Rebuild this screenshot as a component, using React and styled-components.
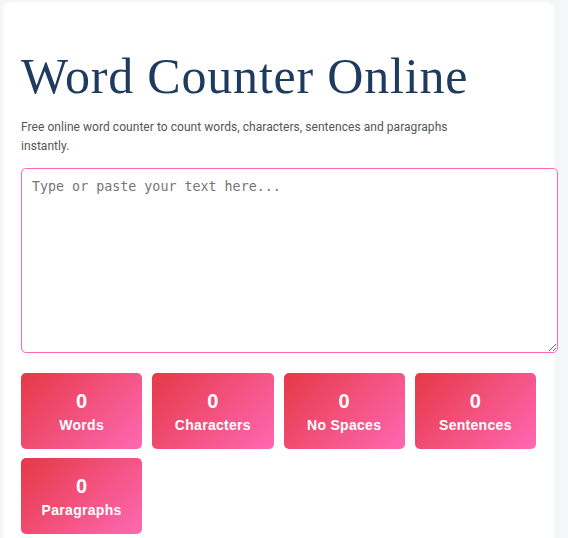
import React from "react";
import styled, { createGlobalStyle } from "styled-components";

const Global = createGlobalStyle`
  html, body { margin: 0; padding: 0; background: #f5f6f8; }
  * { box-sizing: border-box; }
`;

const Page = styled.div`
  padding: 2px 14px 0 3px;
`;

const Card = styled.main`
  background: #ffffff;
  border-radius: 8px;
  padding: 18px 18px 20px;
  min-height: 560px;
`;

const Title = styled.h1`
  margin: 26px 0 0;
  font-family: "Liberation Serif", "Times New Roman", serif;
  font-weight: 400;
  font-size: 50px;
  letter-spacing: 0.8px;
  line-height: 60px;
  color: #1e3a5f;
`;

const Subtitle = styled.p`
  margin: 12px 0 0;
  max-width: 470px;
  font-family: Roboto, "Liberation Sans", sans-serif;
  font-size: 12px;
  letter-spacing: 0.05px;
  line-height: 19px;
  color: #555555;
`;

const TextArea = styled.textarea`
  display: block;
  box-sizing: content-box;
  width: 100%;
  height: 163px;
  margin: 12px 0 0;
  padding: 10px;
  border: 1px solid #ff69b4;
  border-radius: 5px;
  font-family: "DejaVu Sans Mono", monospace;
  font-size: 13.333px;
  color: #333;
  background: #fff;
  outline: none;
  &::placeholder { color: #757575; }
`;

const Stats = styled.div`
  display: grid;
  grid-template-columns: repeat(auto-fill, minmax(120px, 1fr));
  gap: 9px 10px;
  margin-top: 20px;
`;

const StatBox = styled.div`
  height: 76px;
  border-radius: 5px;
  background: linear-gradient(135deg, #e63946 0%, #ff69b4 100%);
  color: #ffffff;
  display: flex;
  flex-direction: column;
  align-items: center;
  justify-content: center;
  font-family: "Liberation Sans", Arial, sans-serif;
  font-weight: 700;
`;

const StatValue = styled.div`
  font-size: 20px;
  line-height: 24px;
`;

const StatLabel = styled.div`
  margin-top: 4px;
  font-size: 14px;
  letter-spacing: 0.3px;
  line-height: 17px;
`;

const stats = ["Words", "Characters", "No Spaces", "Sentences", "Paragraphs"];

export default function App() {
  return (
    <Page>
      <Global />
      <Card>
        <Title>Word Counter Online</Title>
        <Subtitle>
          Free online word counter to count words, characters, sentences and paragraphs instantly.
        </Subtitle>
        <TextArea placeholder="Type or paste your text here..." />
        <Stats>
          {stats.map((s) => (
            <StatBox key={s}>
              <StatValue>0</StatValue>
              <StatLabel>{s}</StatLabel>
            </StatBox>
          ))}
        </Stats>
      </Card>
    </Page>
  );
}
